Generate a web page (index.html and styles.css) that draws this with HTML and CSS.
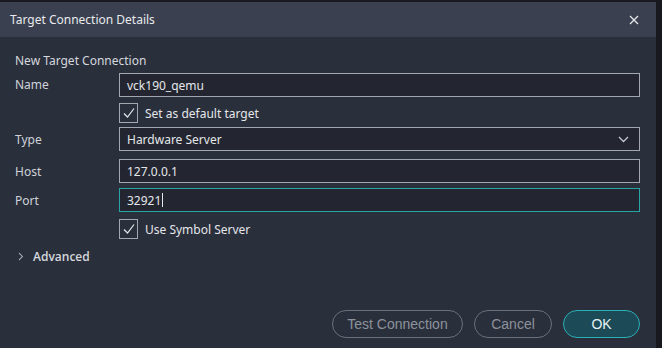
FILE: index.html
```html
<!DOCTYPE html>
<html lang="en">
<head>
  <meta charset="UTF-8" />
  <title>Target Connection Details</title>
  <link rel="stylesheet" href="styles.css">
</head>
<body>
  <div class="dialog">
    <div class="title-bar">
      <span class="title">Target Connection Details</span>
      <svg class="close" width="10" height="10" viewBox="0 0 10 10">
        <path d="M1 1L9 9M9 1L1 9" stroke="#e4e6ea" stroke-width="1.3" fill="none"/>
      </svg>
    </div>

    <div class="content">
      <div class="section-title">New Target Connection</div>

      <div class="form">
        <label class="row-name">Name</label>
        <div class="field row-name">vck190_qemu</div>

        <div class="check row-default">
          <span class="box"><svg width="14" height="14" viewBox="0 0 14 14"><path d="M2 7.5L5.5 11L12 2.5" stroke="#e4e6ea" stroke-width="1.2" fill="none"/></svg></span>
          <span>Set as default target</span>
        </div>

        <label class="row-type">Type</label>
        <div class="field select row-type">
          <span>Hardware Server</span>
          <svg width="11" height="7" viewBox="0 0 11 7"><path d="M1 1L5.5 5.5L10 1" stroke="#c4c8cf" stroke-width="1.3" fill="none"/></svg>
        </div>

        <label class="row-host">Host</label>
        <div class="field row-host">127.0.0.1</div>

        <label class="row-port">Port</label>
        <div class="field focused row-port">32921<span class="caret"></span></div>

        <div class="check row-symbol">
          <span class="box"><svg width="14" height="14" viewBox="0 0 14 14"><path d="M2 7.5L5.5 11L12 2.5" stroke="#e4e6ea" stroke-width="1.2" fill="none"/></svg></span>
          <span>Use Symbol Server</span>
        </div>
      </div>

      <div class="advanced">
        <svg width="6" height="9" viewBox="0 0 6 9"><path d="M1 1L4.5 4.5L1 8" stroke="#9aa0a8" stroke-width="1.1" fill="none"/></svg>
        <span>Advanced</span>
      </div>
    </div>

    <div class="buttons">
      <button class="btn test">Test Connection</button>
      <button class="btn cancel">Cancel</button>
      <button class="btn primary">OK</button>
    </div>
  </div>
</body>
</html>
```

FILE: styles.css
```css
* {
  box-sizing: border-box;
}

body {
  margin: 0;
  background: #17191e;
  font-family: 'Noto Sans', 'Open Sans', sans-serif;
  font-size: 12px;
  color: #d4d7dc;
  overflow: hidden;
}

.dialog {
  width: 656px;
  height: 346px;
  margin-top: 2px;
  background: #2a2f3c;
  display: flex;
  flex-direction: column;
}

.title-bar {
  height: 35px;
  background: #3a4050;
  display: flex;
  align-items: center;
  justify-content: space-between;
  padding: 0 17px 0 10px;
  color: #e8eaed;
  font-size: 12px;
}

.content {
  padding: 15px 16px 0 15px;
  flex: 1;
}

.section-title {
  line-height: 18px;
  color: #d4d7dc;
}

.form {
  display: grid;
  grid-template-columns: 104px 521px;
  align-items: center;
  margin-top: 3px;
}

.form label {
  grid-column: 1;
  color: #cfd2d8;
}

.row-name { grid-row: 1; }
.row-default { grid-row: 2; }
.row-type { grid-row: 3; }
.row-host { grid-row: 4; }
.row-port { grid-row: 5; }
.row-symbol { grid-row: 6; }

.field {
  grid-column: 2;
  height: 24px;
  background: #232630;
  border: 1px solid #a3a8b0;
  padding: 0 7px;
  display: flex;
  align-items: center;
  color: #e4e6ea;
}

label.row-name { align-self: start; padding-top: 3px; }

.form .row-type { margin-top: 4px; }
.form .row-host { margin-top: 8px; }
.form .row-port { margin-top: 5px; }

.select {
  justify-content: space-between;
  padding-right: 10px;
}

.focused {
  border-color: #2aa3a6;
}

.caret {
  display: inline-block;
  width: 1px;
  height: 14px;
  background: #e4e6ea;
  margin-left: 1px;
}

.check {
  grid-column: 2;
  display: flex;
  align-items: center;
  gap: 7px;
  margin-top: 6px;
  color: #e4e6ea;
}

.form .row-symbol { margin-top: 7px; }

.check .box {
  width: 19px;
  height: 20px;
  border: 1px solid #a3a8b0;
  display: flex;
  align-items: center;
  justify-content: center;
}

.advanced {
  display: flex;
  align-items: center;
  gap: 9px;
  margin-top: 9px;
  padding-left: 3px;
  font-family: 'Open Sans', 'Noto Sans', sans-serif;
  font-weight: 600;
  color: #d4d7dc;
}

.buttons {
  display: flex;
  justify-content: flex-end;
  gap: 11px;
  padding: 0 16px 10px 0;
}

.btn {
  height: 28px;
  padding: 0;
  border-radius: 14px;
  border: 1px solid #6b707a;
  background: transparent;
  color: #8d929b;
  font-family: 'Liberation Sans', Arial, sans-serif;
  font-size: 14px;
}

.btn.test { width: 131px; }
.btn.cancel { width: 78px; }

.btn.primary {
  width: 77px;
  background: #1c4a56;
  border-color: #2bb0b6;
  color: #e6f2f3;
}
```
